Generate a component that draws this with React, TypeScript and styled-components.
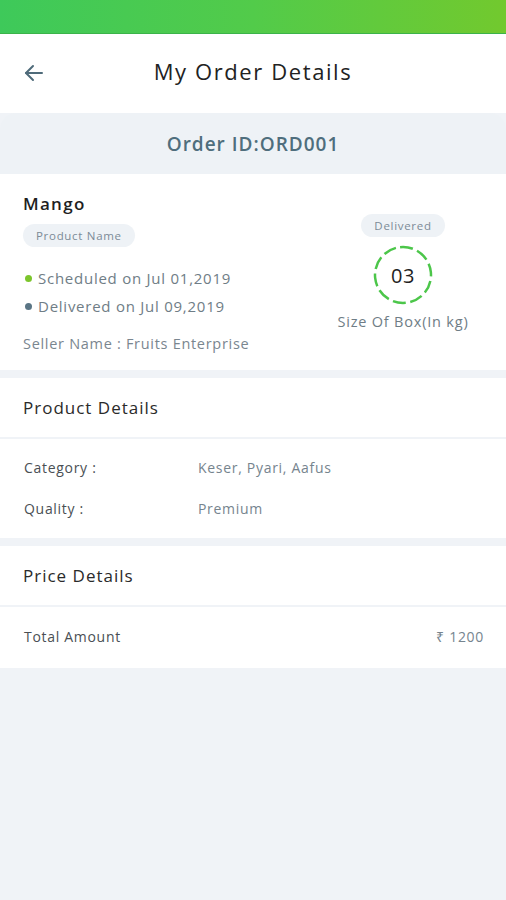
import React from 'react';
import styled, { createGlobalStyle } from 'styled-components';

const GlobalStyle = createGlobalStyle`
  body {
    margin: 0;
    background: #f0f3f7;
    font-family: 'Open Sans', 'Liberation Sans', sans-serif;
  }
`;

const SPage = styled.div`
  width: 506px;
  min-height: 900px;
  background: #f0f3f7;
`;

const STopBar = styled.div`
  height: 33px;
  background: linear-gradient(90deg, #3ec95a 0%, #52cb4a 50%, #72c92e 100%);
  border-bottom: 1px solid #3bb34a;
`;

const SHeader = styled.div`
  height: 79px;
  box-sizing: border-box;
  padding-bottom: 6px;
  background: #fff;
  display: flex;
  align-items: center;
  justify-content: center;
  position: relative;
`;

const SBack = styled.button`
  position: absolute;
  left: 22px;
  top: 27px;
  border: none;
  background: none;
  padding: 0;
  display: flex;
  color: #4f6b7a;
`;

const STitle = styled.h1`
  margin: 0;
  font-size: 22px;
  font-weight: 500;
  color: #222;
  letter-spacing: 1.6px;
`;

const SOrderBar = styled.div`
  height: 61px;
  background: #eef2f6;
  border-radius: 16px 16px 0 0;
  display: flex;
  align-items: center;
  justify-content: center;
  font-size: 19px;
  font-weight: 600;
  color: #4f6e7d;
  letter-spacing: 1px;
`;

const SCard = styled.section<{ $mb?: number }>`
  background: #fff;
  margin-bottom: ${({ $mb }) => $mb ?? 8}px;
`;

const SSummary = styled.div`
  display: flex;
  justify-content: space-between;
  padding: 18px 36px 16px 23px;
`;

const SLeft = styled.div`
  display: flex;
  flex-direction: column;
  align-items: flex-start;
`;

const SProduct = styled.div`
  font-size: 17px;
  font-weight: 600;
  color: #1f1f1f;
  line-height: 24px;
  letter-spacing: 1.3px;
`;

const SPill = styled.span<{ $mt?: number }>`
  display: inline-block;
  background: #eef2f6;
  border-radius: 12px;
  padding: 3px 13px;
  font-size: 11.5px;
  color: #7c8b96;
  margin-top: ${({ $mt }) => $mt ?? 0}px;
  line-height: 17px;
  letter-spacing: 0.7px;
`;

const SStatus = styled.div<{ $mt: number }>`
  display: flex;
  align-items: center;
  gap: 6px;
  margin-top: ${({ $mt }) => $mt}px;
  font-size: 15px;
  color: #6f7d86;
  line-height: 20px;
  letter-spacing: 0.75px;
`;

const SDot = styled.span<{ $color: string }>`
  width: 7px;
  height: 7px;
  border-radius: 50%;
  background: ${({ $color }) => $color};
  margin-left: 2px;
`;

const SSeller = styled.div`
  margin-top: 18px;
  font-size: 14.5px;
  color: #7a868f;
  line-height: 20px;
  letter-spacing: 0.7px;
`;

const SRight = styled.div`
  display: flex;
  flex-direction: column;
  align-items: center;
  width: 134px;
  padding-top: 22px;
`;

const SRing = styled.div`
  position: relative;
  width: 60px;
  height: 60px;
  margin-top: 8px;
  display: flex;
  align-items: center;
  justify-content: center;
  font-size: 20px;
  color: #222;
  letter-spacing: 0.5px;
  & svg {
    position: absolute;
    inset: 0;
  }
`;

const SBoxLabel = styled.div`
  margin-top: 7px;
  font-size: 14.5px;
  color: #6f7d86;
  letter-spacing: 0.8px;
  white-space: nowrap;
`;

const SSectionHead = styled.div`
  padding: 0 23px;
  height: 59px;
  display: flex;
  align-items: center;
  font-size: 17px;
  color: #2a2a2a;
  letter-spacing: 1px;
  border-bottom: 2px solid #f0f3f7;
`;

const SRows = styled.div<{ $pad: string }>`
  padding: ${({ $pad }) => $pad};
  display: flex;
  flex-direction: column;
  gap: 21px;
`;

const SRow = styled.div`
  display: flex;
  align-items: center;
  font-size: 14px;
  line-height: 20px;
  letter-spacing: 0.7px;
`;

const SLabel = styled.span`
  width: 174px;
  color: #4a4f54;
`;

const SValue = styled.span<{ $right?: boolean }>`
  color: #76848e;
  margin-left: ${({ $right }) => ($right ? 'auto' : '0')};
`;

const BackArrow = () => (
  <svg width="24" height="24" viewBox="0 0 24 24" fill="none" stroke="currentColor" strokeWidth="2" strokeLinecap="round" strokeLinejoin="round">
    <path d="M20 12H4" />
    <path d="M11 5l-7 7 7 7" />
  </svg>
);

const DashedRing = () => (
  <svg width="60" height="60" viewBox="0 0 60 60">
    <circle cx="30" cy="30" r="28" fill="none" stroke="#4cc64a" strokeWidth="2.5" strokeDasharray="13 4.6" transform="rotate(-96 30 30)" />
  </svg>
);

export default function App() {
  return (
    <SPage>
      <GlobalStyle />
      <STopBar />
      <SHeader>
        <SBack aria-label="back">
          <BackArrow />
        </SBack>
        <STitle>My Order Details</STitle>
      </SHeader>
      <SOrderBar>Order ID:ORD001</SOrderBar>

      <SCard>
        <SSummary>
          <SLeft>
            <SProduct>Mango</SProduct>
            <SPill $mt={8}>Product Name</SPill>
            <SStatus $mt={21}>
              <SDot $color="#7cc52c" />
              Scheduled on Jul 01,2019
            </SStatus>
            <SStatus $mt={8}>
              <SDot $color="#5a7585" />
              Delivered on Jul 09,2019
            </SStatus>
            <SSeller>Seller Name : Fruits Enterprise</SSeller>
          </SLeft>
          <SRight>
            <SPill>Delivered</SPill>
            <SRing>
              <DashedRing />
              03
            </SRing>
            <SBoxLabel>Size Of Box(In kg)</SBoxLabel>
          </SRight>
        </SSummary>
      </SCard>

      <SCard>
        <SSectionHead>Product Details</SSectionHead>
        <SRows $pad="19px 24px 19px 24px">
          <SRow>
            <SLabel>Category :</SLabel>
            <SValue>Keser, Pyari, Aafus</SValue>
          </SRow>
          <SRow>
            <SLabel>Quality :</SLabel>
            <SValue>Premium</SValue>
          </SRow>
        </SRows>
      </SCard>

      <SCard $mb={0}>
        <SSectionHead>Price Details</SSectionHead>
        <SRows $pad="20px 22px 21px 24px">
          <SRow>
            <SLabel>Total Amount</SLabel>
            <SValue $right>₹ 1200</SValue>
          </SRow>
        </SRows>
      </SCard>
    </SPage>
  );
}
